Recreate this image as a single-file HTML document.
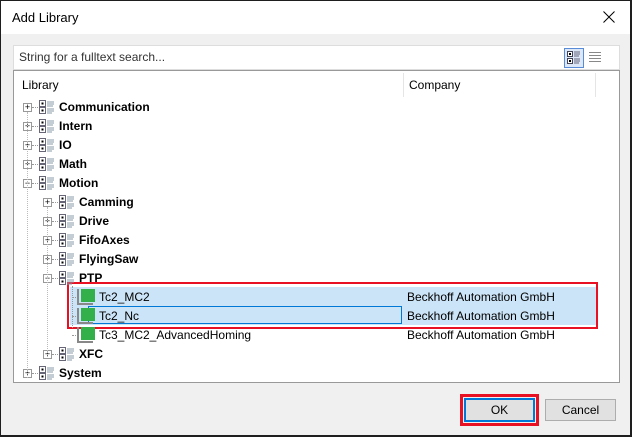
<!DOCTYPE html><html><head><style>
body{margin:0;width:632px;height:437px;background:#1e1e1e;font-family:"Liberation Sans",sans-serif;font-size:12px;overflow:hidden;position:relative}
.a{position:absolute}
.win{left:1px;top:1px;width:629px;height:434px;background:#f0f0f0}
.title{left:1px;top:1px;width:629px;height:33px;background:#fff}
.row{position:absolute;height:19px;line-height:19px;white-space:nowrap}
.b{font-weight:bold;color:#000}
.exp{position:absolute;width:7px;height:7px;border:1px solid #999;background:#fff;font-size:9px;line-height:7px;text-align:center;color:#000}
.ico{position:absolute;width:16px;height:14px}
.leaf{position:absolute;width:16px;height:16px}
</style></head><body>
<div class="a win"></div>
<div class="a title"></div>
<div class="a" style="left:12px;top:10px;font-size:13px">Add Library</div>
<svg class="a" style="left:603px;top:11px" width="12" height="12" viewBox="0 0 12 12"><path d="M0.5 0.5L11.5 11.5M11.5 0.5L0.5 11.5" stroke="#000" stroke-width="1"/></svg>
<div class="a" style="left:13px;top:45px;width:607px;height:25px;background:#fff;border:1px solid #ddd;box-sizing:border-box"></div>
<div class="a" style="left:19px;top:50px;color:#333">String for a fulltext search...</div>
<div class="a" style="left:564px;top:48px;width:20px;height:20px;border:1px solid #5a8bd6;background:#dce8f8;box-sizing:border-box"></div>
<svg class="a" style="left:567px;top:51px" width="14" height="14" viewBox="0 0 14 14"><rect x=".5" y=".5" width="5" height="5" fill="#fff" stroke="#445"/><rect x=".5" y="7.5" width="5" height="5" fill="#fff" stroke="#445"/><rect x="2" y="2" width="2" height="2"/><rect x="2" y="9" width="2" height="2"/><path d="M7 1h6M7 3h6M7 5h5M7 8h6M7 10h6M7 12h5" stroke="#667"/></svg>
<div class="a" style="left:589px;top:52px;width:12px;height:10px;background:repeating-linear-gradient(#888 0 1px,transparent 1px 3px)"></div>
<div class="a" style="left:13px;top:70px;width:607px;height:313px;background:#fff;border:1px solid #999;box-sizing:border-box"></div>
<div class="a" style="left:403px;top:73px;width:1px;height:24px;background:#e5e5e5"></div>
<div class="a" style="left:595px;top:73px;width:1px;height:24px;background:#e5e5e5"></div>
<div class="a" style="left:22px;top:78px">Library</div>
<div class="a" style="left:409px;top:78px">Company</div>
<div class="a" style="left:70px;top:287px;width:528px;height:38px;background:#cce4f7"></div>
<div class="a" style="left:88px;top:306px;width:314px;height:18px;border:1px solid #0078d7;box-sizing:border-box"></div>
<div class="a" style="left:67px;top:282px;width:531px;height:47px;border:2px solid #e81123;box-sizing:border-box"></div>
<div id="t"></div>
<div class="a" style="left:460px;top:394px;width:79px;height:32px;border:3px solid #e81123;box-sizing:border-box"></div>
<div class="a" style="left:464px;top:398px;width:71px;height:24px;border:2px solid #0078d7;background:#e1e1e1;box-sizing:border-box;text-align:center;line-height:20px">OK</div>
<div class="a" style="left:545px;top:399px;width:71px;height:22px;border:1px solid #adadad;background:#e1e1e1;box-sizing:border-box;text-align:center;line-height:20px">Cancel</div>
<script>
var rows=[[0,'Communication','+'],[0,'Intern','+'],[0,'IO','+'],[0,'Math','+'],[0,'Motion','-'],[1,'Camming','+'],[1,'Drive','+'],[1,'FifoAxes','+'],[1,'FlyingSaw','+'],[1,'PTP','-'],[2,'Tc2_MC2'],[2,'Tc2_Nc'],[2,'Tc3_MC2_AdvancedHoming'],[1,'XFC','+'],[0,'System','+']];
var h='';rows.forEach(function(r,i){var y=98+i*19,l=r[0];
if(l<2){var ex=23+l*20;h+='<div class="exp" style="left:'+ex+'px;top:'+(y+5)+'px">'+(r[2]=='+'?'+':'−')+'</div>';
h+='<div class="a" style="left:'+(ex+9)+'px;top:'+(y+9)+'px;width:6px;border-top:1px dotted #999"></div>';
h+='<svg class="ico" style="left:'+(ex+16)+'px;top:'+(y+2)+'px" viewBox="0 0 16 14"><rect x=".5" y=".5" width="6" height="6" fill="#fff" stroke="#667"/><rect x=".5" y="7.5" width="6" height="6" fill="#fff" stroke="#667"/><rect x="2.5" y="2.5" width="2" height="2" fill="#000"/><rect x="2.5" y="9.5" width="2" height="2" fill="#000"/><path d="M8 2h7M8 4h7M8 6h6M8 9h7M8 11h7M8 13h5" stroke="#8899aa"/></svg>';
h+='<div class="row b" style="left:'+(ex+36)+'px;top:'+y+'px;font-size:12px">'+r[1]+'</div>';}
else{h+='<div class="a" style="left:72px;top:'+(y+9)+'px;width:6px;border-top:1px dotted #999"></div>';
h+='<div class="leaf" style="left:77px;top:'+(y+1)+'px;border-left:2px solid #888;border-bottom:2px solid #888;box-sizing:border-box"></div><div class="a" style="left:81px;top:'+(y+1)+'px;width:14px;height:13px;background:#33b04a"></div>';
h+='<div class="row" style="left:99px;top:'+y+'px">'+r[1]+'</div><div class="row" style="left:407px;top:'+y+'px">Beckhoff Automation GmbH</div>';}});
h+='<div class="a" style="left:72px;top:286px;height:42px;border-left:1px dotted #999"></div>';
h+='<div class="a" style="left:27px;top:112px;height:266px;border-left:1px dotted #bbb"></div><div class="a" style="left:47px;top:207px;height:150px;border-left:1px dotted #bbb"></div>';
document.getElementById('t').innerHTML=h;
</script>
</body></html>
